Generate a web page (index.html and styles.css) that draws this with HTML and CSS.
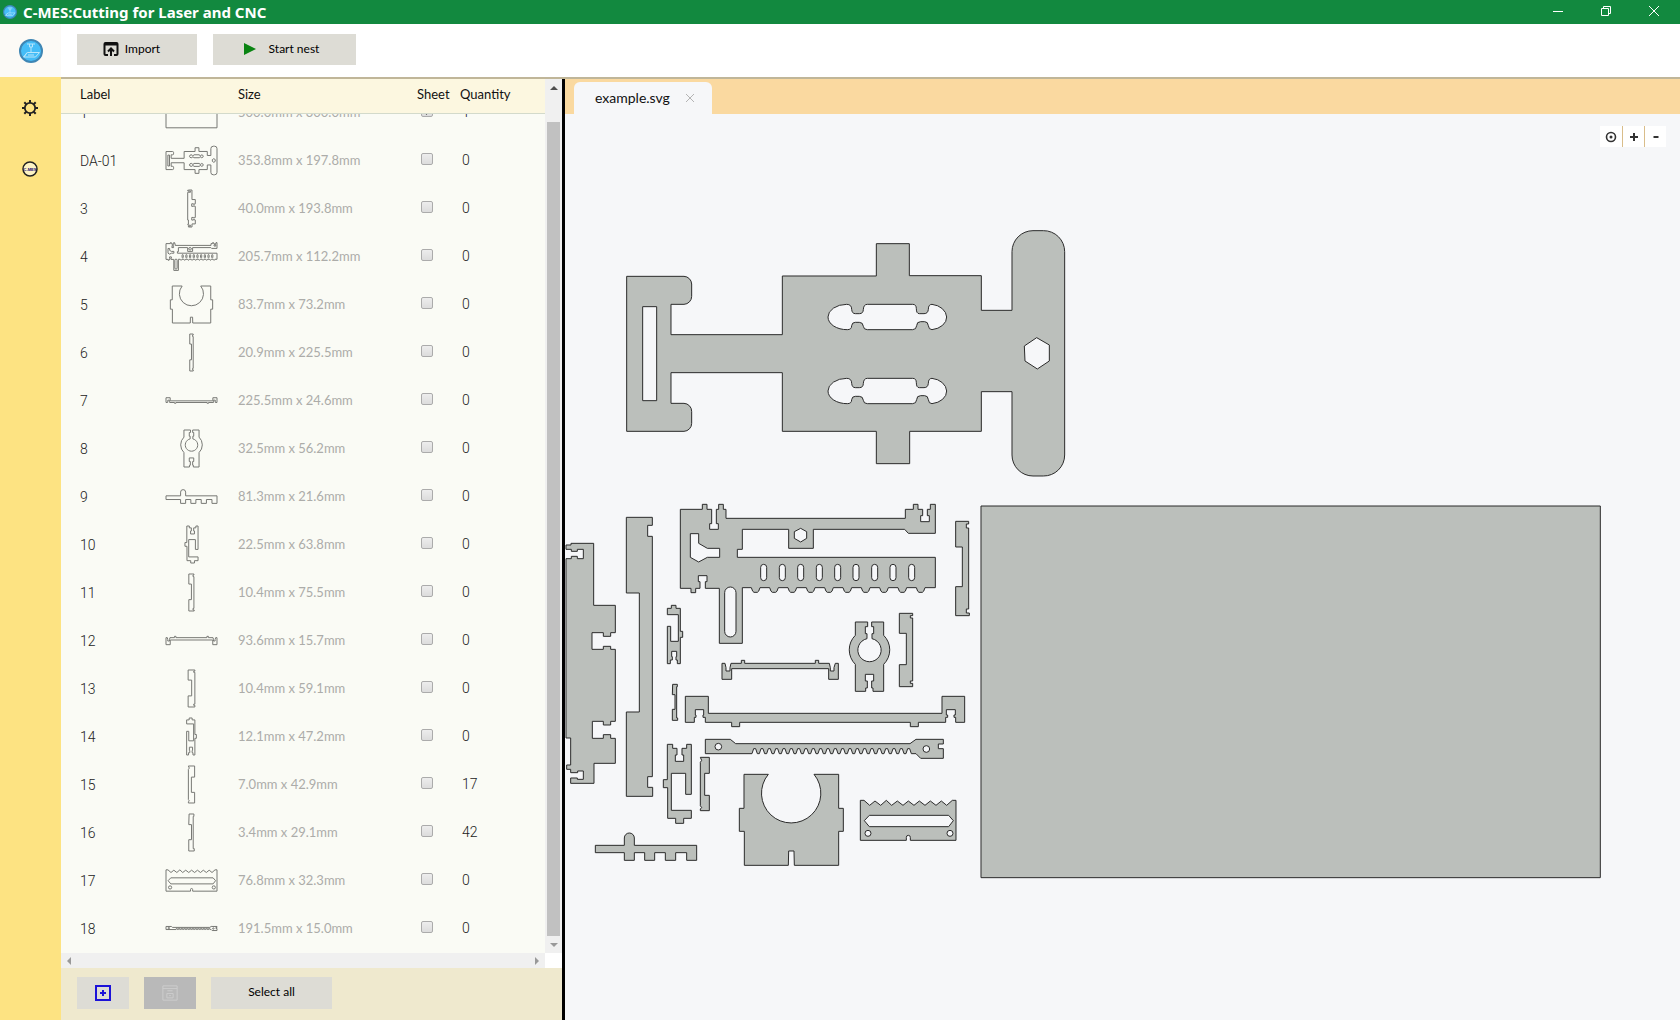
FILE: index.html
```html
<!DOCTYPE html>
<html lang="en">
<head>
<meta charset="utf-8">
<title>C-MES:Cutting for Laser and CNC</title>
<link rel="stylesheet" href="styles.css">
</head>
<body>
<svg class="defs" aria-hidden="true">
  <defs>
    <symbol id="logo" viewBox="0 0 24 24">
      <circle cx="12" cy="12" r="11" fill="#45bdf7" stroke="#3f86b4" stroke-width="2"/>
      <path d="M8 5h8M10.500 5v3h3V5M12 8v6M8.500 13.500h12l-4 4.500H4.500zM8 13.500l-3 4.500M9 16h6" fill="none" stroke="#b9e6fb" stroke-width="1"/>
    </symbol>
    <path id="part-1" class="shape" d="M963-282H2821V833H963Z"/>
    <path id="part-2" class="shape" d="M80 199H252A24 24 0 0 1 275 222V259A24 24 0 0 1 252 283H213V374H547V198H829V101H928V197H1144V301H1236V125A63 63 0 0 1 1299 62H1330A63 63 0 0 1 1394 125V735A63 63 0 0 1 1330 798H1299A63 63 0 0 1 1236 735V545H1144V664H929V761H829V664H547V488H213V580H252A24 24 0 0 1 275 604V640A24 24 0 0 1 252 664H80ZM128 290H170V572H128ZM1310 383L1348 405V453L1312 477L1275 453L1273 408ZM740 283q15 0 15 15q1 13 11 13h12q12 0 12-13q1-15 12-15h136q11 0 11 13q0 15 9 15h14q12 0 13-13q0-15 11-15a52 40 0 0 1 44 38a52 38 0 0 1-44 38q-10 0-11-12q-1-12-11-12h-12q-12 0-12 12q-1 12-12 12h-136q-11 0-12-10q-1-12-12-12h-12q-10 0-11 10q0 12-13 12a57 38 0 0 1-58-38a57 38 0 0 1 56-38zM740 505q15 0 15 15q1 13 11 13h12q12 0 12-13q1-15 12-15h136q11 0 11 13q0 15 9 15h14q12 0 13-13q0-15 11-15a52 40 0 0 1 44 38a52 38 0 0 1-44 38q-10 0-11-12q-1-12-11-12h-12q-12 0-12 12q-1 12-12 12h-136q-11 0-12-10q-1-12-12-12h-12q-10 0-11 10q0 12-13 12a57 38 0 0 1-58-38a57 38 0 0 1 56-38z"/>
    <path id="part-3" class="shape" d="M33 160H101V346H166V428H152V439H130V428H96V478H130V469H152V478H166V694H152V705H130V694H97V745H130V734H152V745H166V820H102V880H32V864H52V868H70V843H53V848H32V838H20V825H32V744H18V206H34V199H52V206H70V178H52V184H34V178H18V165H33Z"/>
    <path id="part-4" class="shape" d="M61 58H127V43H141V58H155V101H149V118H175V101H169V58H176V43H190V58H198V85H736V58H760V43H774V58H788V77H782V95H808V77H802V58H811V43H826V130H745L734 118H460V175H386V118H247V178H232V202H826V293H795q-4 14-8 14h-10q-4 0-8-14h-29q-4 14-8 14h-10q-4 0-8-14h-29q-4 14-8 14h-10q-4 0-8-14h-29q-4 14-8 14h-10q-4 0-8-14h-29q-4 14-8 14h-10q-4 0-8-14h-29q-4 14-8 14h-10q-4 0-8-14h-29q-4 14-8 14h-10q-4 0-8-14h-29q-4 14-8 14h-10q-4 0-8-14h-29q-4 14-8 14h-10q-4 0-8-14h-29q-4 14-8 14h-10q-4 0-8-14H247V460H178V295H136V275H141V257H115V275H120V295H107V308H93V295H61ZM302 232a9 9 0 0 1 18 0v31a9 9 0 0 1-18 0zM358 232a9 9 0 0 1 18 0v31a9 9 0 0 1-18 0zM413 232a9 9 0 0 1 18 0v31a9 9 0 0 1-18 0zM469 232a9 9 0 0 1 18 0v31a9 9 0 0 1-18 0zM524 232a9 9 0 0 1 18 0v31a9 9 0 0 1-18 0zM579 232a9 9 0 0 1 18 0v31a9 9 0 0 1-18 0zM635 232a9 9 0 0 1 18 0v31a9 9 0 0 1-18 0zM690 232a9 9 0 0 1 18 0v31a9 9 0 0 1-18 0zM746 232a9 9 0 0 1 18 0v31a9 9 0 0 1-18 0zM422 115L440 125V145L422 156L403 145V125ZM194 308a17 17 0 0 1 34 0V424a17 17 0 0 1-34 0ZM91 131H116V160L142 175H179V202H142L116 216L91 202Z"/>
    <path id="part-5" class="shape" d="M252 523H325A89 89 0 1 0 462 523H536V625H550V694H536V796H403L402 753H386L385 796H253V694H238V625H252Z"/>
    <path id="part-6" class="shape" d="M199 82H277V106H263V139H277V860H263V892H278V919H199V666H238V309H199Z"/>
    <path id="part-7" class="shape" d="M76 289H145V340H846V289H914V367H887V352H882V345H886V329H859V345H863V352H857V367H775V380H751V367H239V380H215V367H136V352H129V345H131V329H106V345H108V352H103V367H76Z"/>
    <path id="part-8" class="shape" d="M586 66H623V80H616V101H621V116A35 35 0 1 0 636 116V101H641V80H635V66H671V106A61 61 0 0 1 671 193V274H639V264H635V243H641V223H616V243H622V264H617V274H586V193A61 61 0 0 1 586 106Z"/>
    <path id="part-9" class="shape" d="M106 1066H193V1044A15 15 0 0 1 223 1044V1066H410V1111H380V1088H347V1111H316V1088H284V1111H254V1088H223V1111H193V1088H106Z"/>
    <path id="part-10" class="shape" d="M322 763H338V775H351V795H346V814H371V795H366V775H380V763H394V913H377V850H334V961H394V985H371V1000H347V985H323V893H310V869H322Z"/>
    <path id="part-11" class="shape" d="M887 94H926V102H919V114H926V357H919V369H928V377H887V290H907V171H887Z"/>
    <path id="part-12" class="shape" d="M186 190H195L198 203V213H210V203L213 190H244V181H254V190H466V181H476V190H508L511 203V213H522V203L526 190H535V238H506V206H215V238H186Z"/>
    <path id="part-13" class="shape" d="M718 40H758V47H751V54H758V243H751V250H758V260H718V194H739V100H718Z"/>
    <path id="part-14" class="shape" d="M334 355V346H348V355H361V424H368V442H361V521H352V510H348V500H350V484H335V500H337V510H331V521H322V409H332V454H355V374H322V355Z"/>
    <path id="part-15" class="shape" d="M421 802H448V850H434V916H448V962H421V957L425 953L421 947V817L425 811Z"/>
    <path id="part-16" class="shape" d="M338 583H352V590H350V684H353V691H337V658H345V614H337Z"/>
    <path id="part-17" class="shape" d="M601 601H612L629 616L645 603L662 616L679 601L695 616L712 603L729 616L745 603L762 616L778 603L795 616L811 603L828 616L844 603L860 616L877 601H888V721H751V712A6 6 0 0 0 739 712V721H601ZM613 662L628 646H866L880 662L866 680H628ZM615 700a9 9 0 0 0 18 0a9 9 0 0 0-18 0zM861 700a9 9 0 0 0 18 0a9 9 0 0 0-18 0z"/>
    <path id="part-18" class="shape" d="M136 418H211L227 431H750L768 418H850V432H835V446H850V475H782L768 461H754l-5-15h-6l-5 15h-6l-5-15h-6l-5 15h-6l-5-15h-6l-5 15h-6l-5-15h-6l-5 15h-6l-5-15h-6l-5 15h-6l-5-15h-6l-5 15h-6l-5-15h-6l-5 15h-6l-5-15h-6l-5 15h-6l-5-15h-6l-5 15h-6l-5-15h-6l-5 15h-6l-5-15h-6l-5 15h-6l-5-15h-6l-5 15h-6l-5-15h-6l-5 15h-6l-5-15h-6l-5 15h-6l-5-15h-6l-5 15h-6l-5-15h-6l-5 15h-6l-5-15h-6l-5 15h-6l-5-15h-6l-5 15h-6l-5-15h-6l-5 15h-6l-5-15h-6l-5 15h-6l-5-15h-6l-5 15h-6l-5-15h-6l-5 15H136ZM165 440a10 10 0 0 0 20 0a10 10 0 0 0-20 0zM789 447a10 10 0 0 0 20 0a10 10 0 0 0-20 0z"/>
  </defs>
</svg>

<header class="titlebar">
  <svg class="titlebar-logo"><use href="#logo"/></svg>
  <h1 class="titlebar-title">C-MES:Cutting for Laser and CNC</h1>
  <div class="window-buttons">
    <button class="window-button" type="button" aria-label="Minimize"><svg viewBox="0 0 12 12"><path d="M1 6.500h10"/></svg></button>
    <button class="window-button" type="button" aria-label="Restore"><svg viewBox="0 0 12 12"><path d="M1.500 3.500h7v7h-7zM3.500 3.500v-2h7v7h-2"/></svg></button>
    <button class="window-button" type="button" aria-label="Close"><svg viewBox="0 0 12 12"><path d="M1 1l10 10M11 1L1 11"/></svg></button>
  </div>
</header>

<div class="app">
  <nav class="sidebar">
    <a class="sidebar-logo" href="#" aria-label="Home"><svg><use href="#logo"/></svg></a>
    <a class="sidebar-link" href="#" aria-label="Settings">
      <svg viewBox="0 0 18 18"><circle cx="9" cy="9" r="5.200" fill="none" stroke="#222" stroke-width="1.800"/><path d="M9 1v3M9 14v3M1 9h3M14 9h3M3.300 3.300l2 2M12.700 12.700l2 2M3.300 14.700l2-2M12.700 5.300l2-2" stroke="#222" stroke-width="2"/></svg>
    </a>
    <a class="sidebar-link" href="#" aria-label="About">
      <svg viewBox="0 0 18 18"><circle cx="9" cy="9" r="7" fill="#fdf3c4" stroke="#222" stroke-width="1.500"/><text class="about-text" x="9" y="11" text-anchor="middle">C-MES</text></svg>
    </a>
  </nav>

  <div class="main">
    <div class="toolbar">
      <button class="button button-import" type="button">
        <svg viewBox="0 0 16 16"><path d="M5 14H2.500Q1.500 14 1.500 13V3Q1.500 2 2.500 2h11Q14.500 2 14.500 3v10q0 1-1 1H11" fill="none" stroke="#111" stroke-width="2"/><path d="M2 3.500h12" stroke="#111" stroke-width="2"/><path d="M8 15V8M5 10.500L8 7.500l3 3" fill="none" stroke="#111" stroke-width="2"/></svg>
        Import
      </button>
      <button class="button button-nest" type="button">
        <svg viewBox="0 0 16 16"><path d="M2 2l12 6-12 6z" fill="#0a8412"/></svg>
        Start nest
      </button>
    </div>

    <div class="workspace">
      <section class="parts-panel">
        <div class="parts-view">
          <div class="parts-scroll" id="parts-scroll">
            <table class="parts-table">
              <thead>
                <tr><th class="col-label">Label</th><th class="col-thumb"></th><th class="col-size">Size</th><th class="col-sheet">Sheet</th><th class="col-qty">Quantity</th></tr>
              </thead>
              <tbody id="parts"></tbody>
            </table>
          </div>
          <div class="vbar"><span class="arrow arrow-up"></span><span class="vbar-thumb"></span><span class="arrow arrow-down"></span></div>
          <div class="hbar"><span class="arrow arrow-left"></span><span class="arrow arrow-right"></span></div>
        </div>
        <footer class="parts-actions">
          <button class="button button-icon" type="button" aria-label="Add sheet"><svg viewBox="0 0 16 16"><path d="M1 1h14v14H1zM8 5v6M5 8h6" fill="none" stroke="#1c12d8" stroke-width="2"/></svg></button>
          <button class="button button-icon" type="button" aria-label="Delete" disabled><svg viewBox="0 0 18 18"><path d="M1 1h16v16H1zM1 4h16M6 6.500h6M5.500 9.500h7v5h-7zM8 12h2" fill="none" stroke="#cfcfcf" stroke-width="1"/></svg></button>
          <button class="button button-select" type="button">Select all</button>
        </footer>
      </section>

      <section class="viewer">
        <div class="tabs">
          <div class="tab"><a class="tab-name" href="#">example.svg</a>
            <button class="tab-close" type="button" aria-label="Close tab"><svg viewBox="0 0 8 8"><path d="M0 0l8 8M8 0L0 8"/></svg></button>
          </div>
        </div>
        <div class="canvas">
          <svg class="drawing" role="img" aria-label="Parts of example.svg">
            <g transform="translate(35 96) scale(.33333)"><use href="#part-2"/></g>
            <g transform="translate(-5 376) scale(.33333)">
              <use href="#part-3"/><use href="#part-6"/><use href="#part-9"/><use href="#part-10"/><use href="#part-14"/><use href="#part-15"/><use href="#part-16"/>
            </g>
            <g transform="translate(95 376) scale(.33333)"><use href="#part-4"/><use href="#part-11"/></g>
            <g transform="translate(95 486) scale(.33333)">
              <use href="#part-1"/><use href="#part-5"/><use href="#part-7"/><use href="#part-8"/><use href="#part-12"/><use href="#part-13"/><use href="#part-17"/><use href="#part-18"/>
            </g>
          </svg>
          <div class="zoom-buttons">
            <button type="button" aria-label="Fit"><svg viewBox="0 0 12 12"><circle cx="6" cy="6" r="4.500" fill="none" stroke="#333" stroke-width="1.600"/><circle cx="6" cy="6" r="1.500" fill="#333"/></svg></button>
            <button type="button" aria-label="Zoom in"><svg viewBox="0 0 12 12"><path d="M6 2v8M2 6h8" stroke="#333" stroke-width="2"/></svg></button>
            <button type="button" aria-label="Zoom out"><svg viewBox="0 0 12 12"><path d="M3.500 6h5" stroke="#333" stroke-width="2"/></svg></button>
          </div>
        </div>
      </section>
    </div>
  </div>
</div>
<script src="app.js"></script>
</body>
</html>
```
FILE: app.js
```js
// label, size, quantity, bounding box of the outline
const parts = [
  ['1', '500.0mm x 300.0mm', 1, '963 -282 1858 1115'],
  ['DA-01', '353.8mm x 197.8mm', 0, '80 62 1314 736'],
  ['3', '40.0mm x 193.8mm', 0, '18 160 148 720'],
  ['4', '205.7mm x 112.2mm', 0, '61 43 765 417'],
  ['5', '83.7mm x 73.2mm', 0, '238 523 312 273'],
  ['6', '20.9mm x 225.5mm', 0, '199 82 79 837'],
  ['7', '225.5mm x 24.6mm', 0, '76 289 838 91'],
  ['8', '32.5mm x 56.2mm', 0, '568 66 121 208'],
  ['9', '81.3mm x 21.6mm', 0, '106 1029 304 82'],
  ['10', '22.5mm x 63.8mm', 0, '310 763 84 237'],
  ['11', '10.4mm x 75.5mm', 0, '887 94 41 283'],
  ['12', '93.6mm x 15.7mm', 0, '186 181 349 57'],
  ['13', '10.4mm x 59.1mm', 0, '718 40 40 220'],
  ['14', '12.1mm x 47.2mm', 0, '322 346 46 175'],
  ['15', '7.0mm x 42.9mm', 17, '421 802 27 160'],
  ['16', '3.4mm x 29.1mm', 42, '337 583 16 108'],
  ['17', '76.8mm x 32.3mm', 0, '601 601 287 120'],
  ['18', '191.5mm x 15.0mm', 0, '136 418 714 57']
];

document.getElementById('parts').innerHTML = parts.map(([label, size, qty, box], i) => `
  <tr>
    <td class="col-label">${label}</td>
    <td class="col-thumb"><svg class="thumb" viewBox="${box}"><use href="#part-${i + 1}"/></svg></td>
    <td class="col-size">${size}</td>
    <td class="col-sheet"><input class="check" type="checkbox" aria-label="Use ${label} as sheet"${i === 0 ? ' checked' : ''}></td>
    <td class="col-qty">${qty}</td>
  </tr>`).join('');

const view = document.getElementById('parts-scroll');
view.scrollTop = view.scrollHeight;
```
FILE: styles.css
```css
* { box-sizing: border-box; }
body {
  margin: 0;
  height: 100vh;
  display: flex;
  flex-direction: column;
  overflow: hidden;
  font: 13px/18px Lato, "Liberation Sans", sans-serif;
  color: #111;
}
button { font: inherit; color: inherit; border: 0; padding: 0; }
a { color: inherit; text-decoration: none; }
.defs { position: absolute; width: 0; height: 0; }
.shape { vector-effect: non-scaling-stroke; fill-rule: evenodd; }

.titlebar {
  display: flex;
  align-items: center;
  flex: none;
  height: 24px;
  padding: 0 2px 0 3px;
  background: #12893f;
  color: #fff;
}
.titlebar-logo { width: 14px; height: 14px; }
.titlebar-title {
  flex: 1;
  margin: 0 0 0 6px;
  font: bold 15px/24px "Noto Sans", sans-serif;
}
.window-buttons { display: flex; align-self: stretch; }
.window-button {
  display: flex;
  align-items: center;
  justify-content: center;
  width: 48px;
  height: 22px;
  background: none;
}
.window-button svg { width: 12px; height: 12px; fill: none; stroke: #fff; }

.app { flex: 1; display: flex; min-height: 0; }
.sidebar {
  display: flex;
  flex-direction: column;
  flex: none;
  width: 61px;
  background: #fde382;
}
.sidebar-logo {
  display: flex;
  align-items: center;
  justify-content: center;
  height: 53px;
  background: #fcfaf6;
}
.sidebar-logo svg { width: 24px; height: 24px; }
.sidebar-link {
  display: flex;
  align-items: center;
  justify-content: center;
  height: 61px;
  padding-right: 1px;
}
.sidebar-link svg { width: 18px; height: 18px; }
.about-text { font: bold 4px "Liberation Sans", sans-serif; fill: #120a70; }

.main { flex: 1; display: flex; flex-direction: column; min-width: 0; }
.toolbar {
  display: flex;
  gap: 16px;
  flex: none;
  height: 55px;
  padding: 10px 16px;
  background: #fff;
  border-bottom: 2px solid #c0b699;
}
.button {
  display: flex;
  align-items: center;
  justify-content: center;
  background: #dddcd5;
  color: #000;
  font-size: 12px;
}
.button svg { width: 16px; height: 16px; }
.button-import, .button-nest { height: 31px; }
.button-import { width: 120px; gap: 6px; padding: 0 11px 1px 0; }
.button-nest { width: 143px; gap: 11px; padding: 0 8px 1px 0; }

.workspace { flex: 1; display: flex; min-height: 0; }
.parts-panel {
  display: flex;
  flex-direction: column;
  flex: none;
  width: 504px;
  border-right: 3px solid #000;
}
.parts-view {
  flex: 1;
  min-height: 0;
  display: grid;
  grid-template: minmax(0, 1fr) 15px / minmax(0, 1fr) 17px;
  background: #fff;
}
.parts-scroll { overflow: auto; scrollbar-width: none; background: #fafbf5; }
.parts-table {
  width: 100%;
  table-layout: fixed;
  border-spacing: 0;
}
.parts-table th {
  position: sticky;
  top: 0;
  z-index: 1;
  height: 35px;
  padding: 0 0 4px;
  background: #fcf7e0;
  border-bottom: 1px solid #d3dacb;
  font-weight: 400;
  text-align: left;
}
.parts-table td { height: 48px; padding: 0 0 2px; }
.parts-table .col-label { width: 105px; padding-left: 19px; }
.parts-table .col-thumb { width: 72px; }
.parts-table .col-size { width: 179px; }
.parts-table .col-sheet { width: 43px; }
.parts-table td.col-label, .parts-table td.col-qty {
  font: 300 14px/18px Roboto, "Liberation Sans", sans-serif;
  color: #222;
}
.parts-table td.col-label { padding-bottom: 0; }
.parts-table td.col-size { color: #acaca9; }
.parts-table td.col-sheet { padding-left: 4px; }
.parts-table td.col-qty { padding-left: 2px; }
.thumb {
  display: block;
  width: 51px;
  height: 37px;
  overflow: visible;
  fill: none;
  stroke: #777874;
}
.check {
  appearance: none;
  display: grid;
  place-items: center;
  width: 12px;
  height: 12px;
  margin: 0 0 2px;
  border: 1px solid #ababab;
  border-radius: 2px;
  background: linear-gradient(#ededed, #dcdcdc);
}
.check:checked::before {
  content: "";
  width: 8px;
  height: 8px;
  background: #444;
  clip-path: polygon(0 50%, 20% 35%, 40% 60%, 80% 0, 100% 15%, 45% 100%);
}
.vbar {
  display: flex;
  flex-direction: column;
  align-items: center;
  padding: 7px 0 6px;
  background: #f0f0f0;
}
.vbar-thumb { flex: 1; width: 13px; margin: 32px 0 7px; background: #c1c1c1; }
.hbar {
  display: flex;
  align-items: center;
  justify-content: space-between;
  padding: 0 6px;
  background: #f0f0f0;
}
.arrow { border: 4px solid transparent; }
.arrow-up { border-top: 0; border-bottom-color: #505050; }
.arrow-down { border-bottom: 0; border-top-color: #999; }
.arrow-left { border-left: 0; border-right-color: #999; }
.arrow-right { border-right: 0; border-left-color: #999; }

.parts-actions {
  display: flex;
  gap: 15px;
  flex: none;
  height: 52px;
  padding: 9px 16px 11px;
  background: #efe9ce;
}
.button-icon { width: 52px; }
.button-icon:disabled { background: #b9b9b9; }
.button-select { width: 121px; padding-bottom: 2px; }

.viewer { flex: 1; display: flex; flex-direction: column; min-width: 0; background: #f6f7f9; }
.tabs {
  display: flex;
  align-items: flex-end;
  flex: none;
  height: 35px;
  padding-left: 9px;
  background: #fad9a0;
}
.tab {
  display: flex;
  align-items: center;
  justify-content: space-between;
  width: 138px;
  height: 32px;
  padding: 0 18px 0 21px;
  border-radius: 6px 6px 0 0;
  background: #f6f7f9;
  font-size: 14px;
}
.tab-close { display: flex; background: none; }
.tab-close svg { width: 8px; height: 8px; fill: none; stroke: #b4b4b4; }
.canvas { flex: 1; position: relative; min-height: 0; overflow: hidden; }
.drawing {
  display: block;
  width: 100%;
  height: 100%;
  fill: #bbbfbb;
  stroke: #2b2b2b;
}
.zoom-buttons {
  position: absolute;
  top: 12px;
  right: 14px;
  display: flex;
}
.zoom-buttons button {
  display: flex;
  align-items: center;
  justify-content: center;
  width: 22px;
  height: 21px;
  background: #fff;
}
.zoom-buttons button + button { border-left: 1px solid #d9bd8a; }
.zoom-buttons svg { width: 12px; height: 12px; }
```
